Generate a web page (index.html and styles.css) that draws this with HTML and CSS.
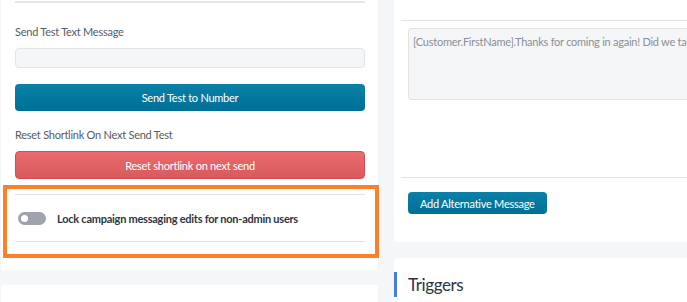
FILE: index.html
```html
<!DOCTYPE html>
<html>

<head>
    <title>Campaign</title>
    <link rel="stylesheet" href="styles.css">
</head>

<body>
    <div class="page">
        <div class="col">
            <div class="card left">
                <div class="topline"></div>
                <div class="label first">Send Test Text Message</div>
                <input type="text" class="field">
                <button class="btn blue wide">Send Test to Number</button>
                <div class="label">Reset Shortlink On Next Send Test</div>
                <button class="btn red wide">Reset shortlink on next send</button>
                <div class="lockwrap">
                    <div class="lock">
                        <span class="toggle"><span class="knob"></span></span>
                        <span class="locktext">Lock campaign messaging edits for non-admin users</span>
                    </div>
                    <span class="mark"></span>
                </div>
            </div>
            <div class="card stub"><span class="tick"></span></div>
        </div>
        <div class="col right">
            <div class="card msg">
                <div class="rline"></div>
                <div class="area">[Customer.FirstName].Thanks for coming in again! Did we take good care of you today?</div>
                <div class="rline second"></div>
                <button class="btn blue small">Add Alternative Message</button>
            </div>
            <div class="card trig">
                <h3 class="title">Triggers</h3>
            </div>
        </div>
    </div>
</body>

</html>
```

FILE: styles.css
```css
body {
    margin: 0;
    background-color: #f5f6f8;
    font-family: Lato, "Open Sans", sans-serif;
    letter-spacing: -0.25px;
    overflow: hidden;
}

.page {
    display: flex;
    gap: 16px;
    padding-left: 1px;
    height: 302px;
    overflow: hidden;
}

.col {
    width: 377px;
    flex-shrink: 0;
}

.col.right {
    width: 320px;
}

.card {
    background-color: white;
    border-radius: 4px;
}

.left {
    padding: 1px 13px 0 14px;
    height: 270px;
    border-top-left-radius: 0;
    border-top-right-radius: 0;
    box-sizing: border-box;
}

.topline {
    border-top: 2px solid #e6e7e9;
}

.label {
    font-size: 11px;
    color: #555b63;
    height: 15px;
    line-height: 15px;
    margin: 16px 0 9px 0;
}

.label.first {
    margin-top: 21px;
}

.field {
    display: block;
    width: 100%;
    height: 20px;
    box-sizing: border-box;
    background-color: #f5f6f8;
    border: 1px solid #e3e4e6;
    border-radius: 4px;
    margin: 0 0 16px 0;
}

.btn {
    display: block;
    border: none;
    color: white;
    font-family: Lato, "Open Sans", sans-serif;
    letter-spacing: -0.25px;
    font-size: 11px;
    cursor: pointer;
    border-radius: 4px;
}

.wide {
    width: 100%;
    height: 27px;
}

.blue {
    background: linear-gradient(#0a81a8, #006f95);
}

.red {
    height: 28px;
    background: linear-gradient(#ec6b6c, #d65a5d);
    border: 1px solid #d84b52;
}

.lockwrap {
    position: relative;
    margin-top: 15px;
}

.lock {
    display: flex;
    align-items: center;
    height: 46px;
    border-top: 1px solid #e1e2e4;
    border-bottom: 1px solid #e1e2e4;
    padding-left: 3px;
    gap: 11px;
}

.toggle {
    width: 28px;
    height: 13px;
    border-radius: 7px;
    background-color: #9ea3ad;
    position: relative;
}

.knob {
    position: absolute;
    left: 3px;
    top: 3px;
    width: 7px;
    height: 7px;
    border-radius: 50%;
    background-color: white;
}

.locktext {
    font-size: 11px;
    font-weight: bold;
    color: #2d3540;
}

.mark {
    position: absolute;
    top: -9px;
    left: -12px;
    right: -14px;
    bottom: -16px;
    border: 4px solid #fd7f28;
}

.stub {
    margin-top: 15px;
    height: 40px;
    position: relative;
}

.tick {
    position: absolute;
    left: -1px;
    bottom: 0;
    width: 3px;
    height: 3px;
    background-color: #4a7be0;
}

.msg {
    height: 242px;
    padding-left: 7px;
    border-top-left-radius: 0;
    border-top-right-radius: 0;
    box-sizing: border-box;
    padding-top: 20px;
}

.rline {
    border-top: 1px solid #e1e2e4;
}

.area {
    margin: 7px 0 0 7px;
    height: 72px;
    box-sizing: border-box;
    background-color: #f5f6f8;
    border: 1px solid #e1e2e4;
    border-right: none;
    border-radius: 4px 0 0 4px;
    padding: 6px 0 0 4px;
    font-size: 11px;
    color: #8a8f96;
    white-space: nowrap;
    overflow: hidden;
}

.second {
    margin-top: 77px;
}

.small {
    margin: 14px 0 0 7px;
    height: 22px;
    padding: 0 12px;
}

.trig {
    margin-top: 16px;
    height: 60px;
    padding-top: 14px;
    box-sizing: border-box;
}

.title {
    margin: 0;
    border-left: 3px solid #4a7be0;
    height: 25px;
    line-height: 25px;
    padding-left: 11px;
    font-size: 17px;
    font-weight: normal;
    letter-spacing: -0.4px;
    color: #2d3540;
}
```
